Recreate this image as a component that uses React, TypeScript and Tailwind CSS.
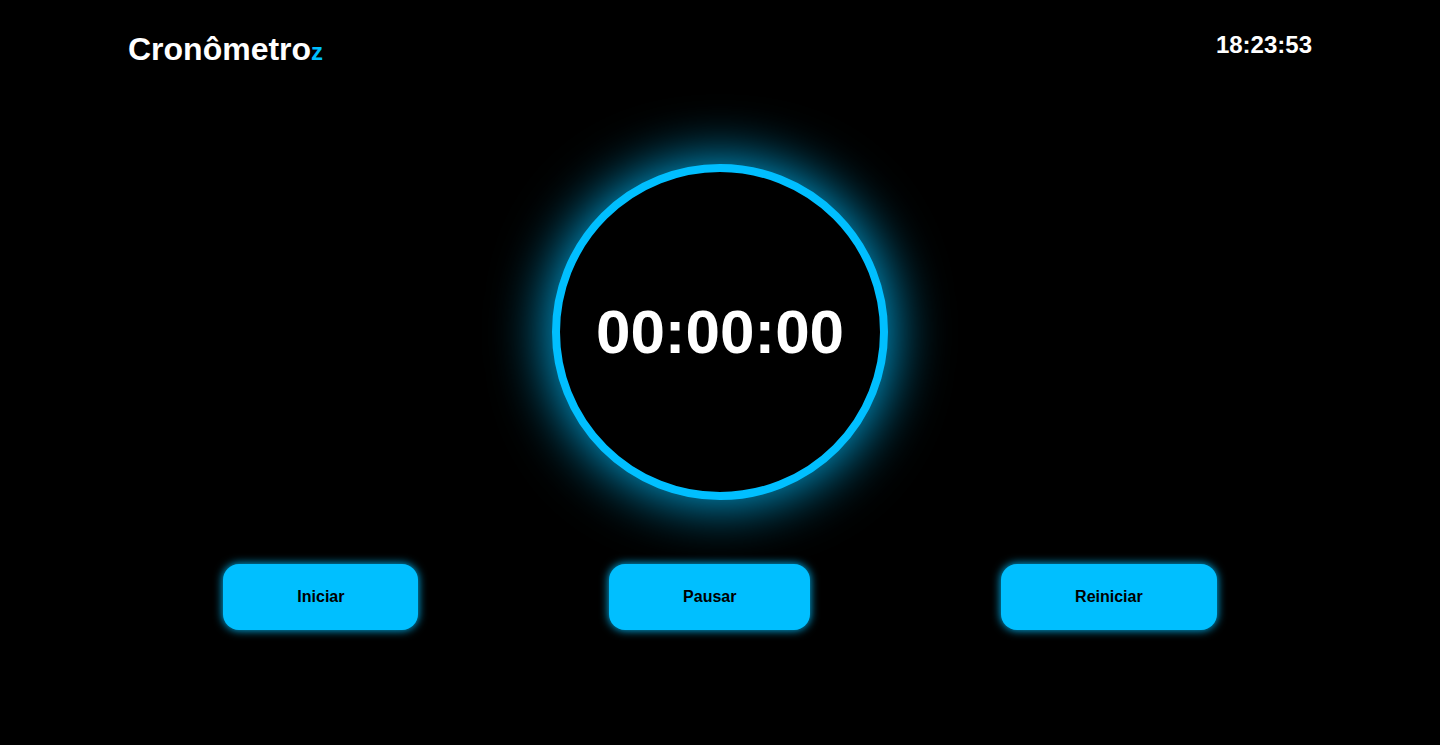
import React from 'react';

const App = () => {
  const buttons = ['Iniciar', 'Pausar', 'Reiniciar'];

  return (
    <div className="min-h-screen w-full bg-black text-white font-['Liberation_Sans',Arial,sans-serif]">
      {/* Header */}
      <header className="flex justify-between items-start px-32 pt-[31px]">
        <h1 className="text-[32px] font-bold leading-[1.15]">
          Cronômetro<span className="text-[24px] text-[#00bfff]">z</span>
        </h1>
        <div className="text-[24px] font-bold leading-[1.15]">18:23:53</div>
      </header>

      {/* Timer */}
      <main className="flex flex-col items-center">
        <div className="mt-[96px] w-[336px] h-[336px] rounded-full border-8 border-[#00bfff] bg-black flex items-center justify-center shadow-[0_0_60px_#00bfff]">
          <span className="text-[62px] font-bold leading-none">00:00:00</span>
        </div>

        <div className="w-full mt-16 px-32 flex justify-around">
          {buttons.map(label => (
            <button
              key={label}
              className="px-[74px] py-6 rounded-2xl bg-[#00bfff] text-black text-base font-bold leading-[1.15] shadow-[0_0_10px_#00bfff]"
            >
              {label}
            </button>
          ))}
        </div>
      </main>
    </div>
  );
};

export default App;
